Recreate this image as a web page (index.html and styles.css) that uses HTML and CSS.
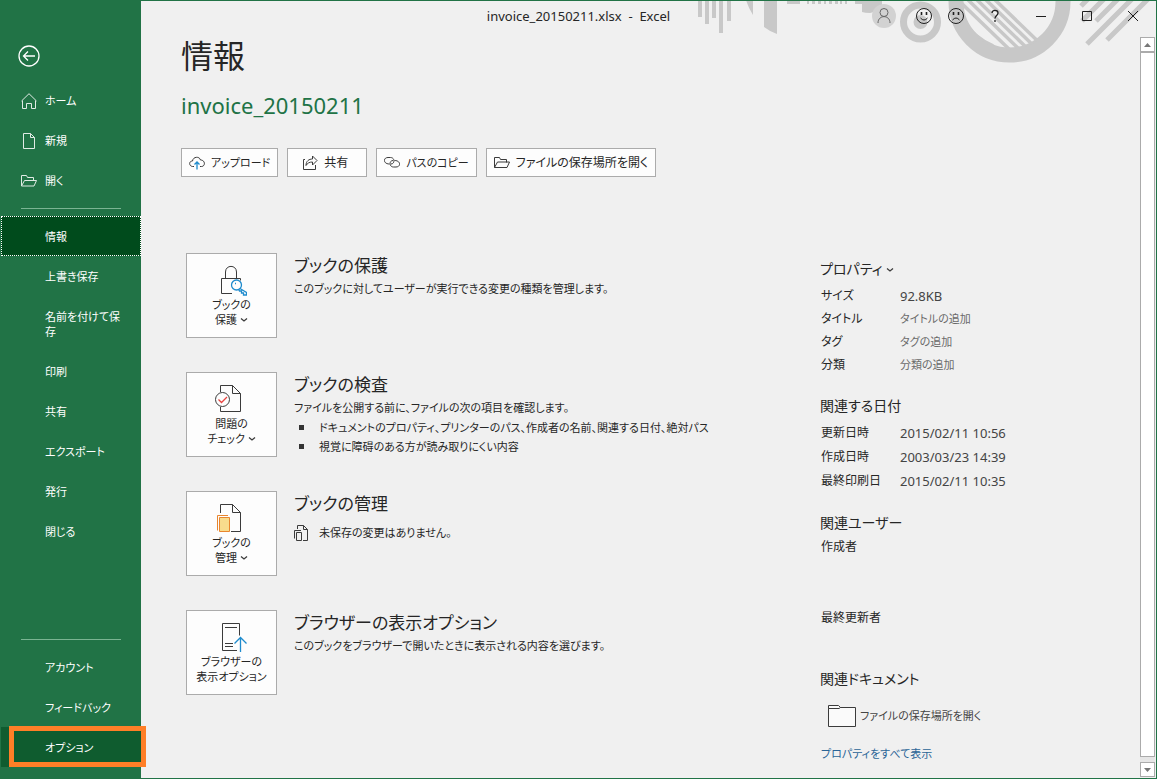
FILE: index.html
```html
<!DOCTYPE html>
<html lang="ja">
<head>
<meta charset="utf-8">
<meta name="viewport" content="width=device-width, initial-scale=1">
<title>invoice_20150211.xlsx - Excel</title>
<link rel="stylesheet" href="styles.css">
</head>
<body>
<div class="window">
  <header class="titlebar">
    <svg class="decor" width="497" height="63" viewBox="-1 1 497 63" aria-hidden="true">
      <defs><clipPath id="ring"><circle cx="349.5" cy="1.5" r="48"/></clipPath></defs>
      <g fill="#c8c8c8">
        <path d="M38 0h4v17h-4zM45 0h4v24h-4zM52 0h4v18h-4zM59 0h4v33h-4zM67 0h4v21h-4z"/>
        <path d="M86 0h7v15Q88 7 86 0zM104 0h13v34Q109 31 104 27z"/>
        <path d="M127 0h13v4h-13zM147 0h2v4h-2zM152 0h3v4h-3zM158 0h3v4h-3zM164 0h2v4h-2zM169 0h3v4h-3zM175 0h3v4h-3zM180 0h2v4h-2zM185 0h2v4h-2z"/>
        <path d="M195 0h27v10l-12 3q-5 0-8-1V4h-7z"/>
        <circle cx="260.500" cy="22" r="7"/>
      </g>
      <circle cx="224" cy="16" r="12" fill="#d2d2d2"/>
      <g fill="none" stroke="#c8c8c8">
        <circle cx="260.500" cy="22" r="17" stroke-width="7"/>
        <circle cx="349.500" cy="1.500" r="53.500" stroke-width="15"/>
        <g clip-path="url(#ring)" stroke-width="3.500">
          <path d="M331 -4l56 54M322 -4l56 54M313 -4l56 54M304 -4l56 54M294 -4l56 54"/>
          <path d="M302 20Q314 38 333 46" stroke-width="4"/>
        </g>
        <path d="M427 44L472 -1M447 40L488 -1M436 21L458 -1M422 21L444 -1M421 6L428 -1" stroke-width="5"/>
      </g>
    </svg>
    <div class="doc-title">invoice_20150211.xlsx&nbsp; -&nbsp; Excel</div>
    <div class="controls">
      <button class="ctl wide" type="button" aria-label="アカウント"><svg width="16" height="18" viewBox="0 0 16 18"><circle cx="8" cy="5.500" r="4"/><path d="M2 16C2 7.500 14 7.500 14 16"/></svg></button>
      <button class="ctl narrow" type="button" aria-label="良い点"><svg width="18" height="18" viewBox="0 0 18 18"><circle cx="9" cy="9" r="7.500"/><path d="M5.500 11Q9 15 12.500 11"/><path d="M6.500 5v3M11.500 5v3" stroke-width="1.600"/></svg></button>
      <button class="ctl narrow" type="button" aria-label="悪い点"><svg width="18" height="18" viewBox="0 0 18 18"><circle cx="9" cy="9" r="7.500"/><path d="M5.500 13Q9 9 12.500 13"/><path d="M6.500 5v3M11.500 5v3" stroke-width="1.600"/></svg></button>
      <button class="ctl" type="button" aria-label="ヘルプ"><svg width="10" height="14" viewBox="0 0 10 14"><path d="M2 4C2 .500 8 .500 8 4C8 6.500 5 6.500 5 9.500M5 11v2" stroke-width="1.300"/></svg></button>
      <button class="ctl" type="button" aria-label="最小化"><svg width="10" height="10" viewBox="0 0 10 10"><path d="M0 5.500h10"/></svg></button>
      <button class="ctl" type="button" aria-label="最大化"><svg width="10" height="10" viewBox="0 0 10 10"><path d="M.500 .500h9v9h-9z"/></svg></button>
      <button class="ctl" type="button" aria-label="閉じる"><svg width="10" height="10" viewBox="0 0 10 10"><path d="M0 0l10 10M10 0L0 10"/></svg></button>
    </div>
  </header>

  <nav class="sidebar">
    <button class="back" type="button" aria-label="戻る"><svg width="22" height="22" viewBox="0 0 22 22"><circle cx="11" cy="11" r="10"/><path d="M17 11H5.500M10 6.500L5.500 11l4.500 4.500"/></svg></button>
    <a class="item" href="#"><svg class="nav-icon" width="16" height="16" viewBox="0 0 16 16"><path d="M.500 8L8 .700 15.500 8M1.500 7.500v8h4v-5h5v5h4v-8"/></svg>ホーム</a>
    <a class="item" href="#"><svg class="nav-icon" width="16" height="16" viewBox="0 0 16 16"><path d="M2.500 .500h7l4 4v11h-11zM9.500 .500v4h4"/></svg>新規</a>
    <a class="item" href="#"><svg class="nav-icon" width="16" height="16" viewBox="0 0 16 16"><path d="M.500 13V2.500h5l1 2h6v3M.500 13l3-5.500h12L13 13z"/></svg>開く</a>
    <hr class="rule">
    <a class="item selected" href="#" aria-current="page">情報</a>
    <a class="item" href="#">上書き保存</a>
    <a class="item" href="#">名前を付けて保存</a>
    <a class="item" href="#">印刷</a>
    <a class="item" href="#">共有</a>
    <a class="item" href="#">エクスポート</a>
    <a class="item" href="#">発行</a>
    <a class="item" href="#">閉じる</a>
    <hr class="rule bottom">
    <a class="item" href="#">アカウント</a>
    <a class="item" href="#">フィードバック</a>
    <a class="item hot" href="#">オプション</a>
  </nav>

  <main class="page">
    <h1>情報</h1>
    <p class="filename">invoice_20150211</p>
    <div class="toolbar">
      <button class="compact" type="button"><svg width="16" height="16" viewBox="0 0 16 16"><path d="M5 11.500H3.500C-.300 11-.300 6 3.500 6C4 1.500 10.500 1 11.500 5C16.500 5 16.500 11.500 12.500 11.500H11"/><path class="blue" d="M8 14.500V7M5.500 9.500L8 7l2.500 2.500"/></svg>アップロード</button>
      <button class="share" type="button"><svg width="16" height="16" viewBox="0 0 16 16"><path d="M3 4.500H1.500v10h12V10M4 10.500C4 6 7 4 10.500 4V1L15 5.500 10.500 10V7C7.500 7 5.500 8 4 10.500z"/></svg>共有</button>
      <button class="compact" type="button"><svg width="16" height="16" viewBox="0 0 16 16"><path d="M5.500 9C-1 9-1 2.500 4 2.500h2.500C11 2.500 11 9 7 9M10.500 5.500C17 5.500 17 12 12 12H9.500C5 12 5 5.500 9 5.500"/></svg>パスのコピー</button>
      <button type="button"><svg width="16" height="16" viewBox="0 0 16 16"><path d="M.500 12.500V2.500h5l1 2h6v3M.500 12.500l3-5.500h12L13 12.500z"/></svg>ファイルの保存場所を開く</button>
    </div>

    <div class="columns">
      <div class="sections">
        <section class="section">
          <button class="tile" type="button">
            <svg class="pic" width="32" height="32" viewBox="0 0 32 32"><path d="M17 28.500H6.500v-15h19v2M10.500 13.500V7C10.500-.500 21.500-.500 21.500 7v6.500"/><g class="blue"><circle cx="21.500" cy="20" r="5"/><path d="M25 23.500l6.500 4v2.500h-3v-2h-2v-2h-2l-1-2"/><path d="M20 18.500h1"/></g></svg>
            <span>ブックの<br>保護 <svg class="chev" width="8" height="6" viewBox="0 0 8 6"><path d="M1 1.500l3 2.500 3-2.500"/></svg></span>
          </button>
          <div class="info">
            <h2>ブックの保護</h2>
            <p>このブックに対してユーザーが実行できる変更の種類を管理します。</p>
          </div>
        </section>
        <section class="section">
          <button class="tile" type="button">
            <svg class="pic" width="32" height="32" viewBox="0 0 32 32"><path d="M5.500 8V1.500h12l8 8v18h-20V23M17.500 1.500v8h8"/><circle cx="7.500" cy="15.500" r="7" fill="#fdfdfd"/><path class="red" d="M3.500 15.500l3 3 5.500-5.500"/></svg>
            <span>問題の<br>チェック <svg class="chev" width="8" height="6" viewBox="0 0 8 6"><path d="M1 1.500l3 2.500 3-2.500"/></svg></span>
          </button>
          <div class="info">
            <h2>ブックの検査</h2>
            <p>ファイルを公開する前に、ファイルの次の項目を確認します。</p>
            <ul>
              <li>ドキュメントのプロパティ、プリンターのパス、作成者の名前、関連する日付、絶対パス</li>
              <li>視覚に障碍のある方が読み取りにくい内容</li>
            </ul>
          </div>
        </section>
        <section class="section">
          <button class="tile" type="button">
            <svg class="pic" width="32" height="32" viewBox="0 0 32 32"><path d="M5.500 10V1.500h12l8 8v19H16M17.500 1.500v8h8"/><path class="orange" d="M13 12.500H2.500v15"/><path class="orange" d="M4.500 14.500h10v14h-10z" fill="#f8dc8c"/></svg>
            <span>ブックの<br>管理 <svg class="chev" width="8" height="6" viewBox="0 0 8 6"><path d="M1 1.500l3 2.500 3-2.500"/></svg></span>
          </button>
          <div class="info">
            <h2>ブックの管理</h2>
            <p class="versions"><svg width="16" height="16" viewBox="0 0 16 16"><path d="M3.500 4V.500h6l4 4v11H9M9.500 .500v4h4M7 5.500H.500v8M2.500 7.500h5v8h-5z"/></svg>未保存の変更はありません。</p>
          </div>
        </section>
        <section class="section">
          <button class="tile" type="button">
            <svg class="pic" width="32" height="32" viewBox="0 0 32 32"><path d="M22 28.500H7.500v-27h17v12M10 5.500h12M10 21.500h8M10 24.500h8"/><path class="blue" d="M25.500 30V16M19.500 21.500l6-6 6 6"/></svg>
            <span>ブラウザーの<br>表示オプション</span>
          </button>
          <div class="info">
            <h2>ブラウザーの表示オプション</h2>
            <p>このブックをブラウザーで開いたときに表示される内容を選びます。</p>
          </div>
        </section>
      </div>

      <aside class="props">
        <h3>プロパティ <svg class="chev" width="8" height="6" viewBox="0 0 8 6"><path d="M1 1.500l3 2.500 3-2.500"/></svg></h3>
        <table>
          <tr><th scope="row">サイズ</th><td class="latin">92.8KB</td></tr>
          <tr><th scope="row">タイトル</th><td class="hint">タイトルの追加</td></tr>
          <tr><th scope="row">タグ</th><td class="hint">タグの追加</td></tr>
          <tr><th scope="row">分類</th><td class="hint">分類の追加</td></tr>
        </table>
        <h3>関連する日付</h3>
        <table class="dates">
          <tr><th scope="row">更新日時</th><td class="latin">2015/02/11 10:56</td></tr>
          <tr><th scope="row">作成日時</th><td class="latin">2003/03/23 14:39</td></tr>
          <tr><th scope="row">最終印刷日</th><td class="latin">2015/02/11 10:35</td></tr>
        </table>
        <h3>関連ユーザー</h3>
        <p class="person">作成者</p>
        <p class="person">最終更新者</p>
        <h3 class="related">関連ドキュメント</h3>
        <a class="location" href="#"><svg width="28" height="22" viewBox="0 0 28 22"><path d="M.500 2.500h27v19H.500z" fill="#fafafa"/><path d="M.500 3.500v-3h10l2 2-1.500 1z" fill="#fafafa"/></svg>ファイルの保存場所を開く</a>
        <a class="all" href="#">プロパティをすべて表示</a>
      </aside>
    </div>
  </main>

  <div class="scrollbar">
    <button type="button" aria-label="上へ"><svg width="7" height="4" viewBox="0 0 7 4"><path d="M0 4L3.500 0 7 4z"/></svg></button>
    <div class="thumb"></div>
    <button type="button" aria-label="下へ"><svg width="7" height="4" viewBox="0 0 7 4"><path d="M0 0h7L3.500 4z"/></svg></button>
  </div>
</div>
</body>
</html>
```

FILE: styles.css
```css
* { box-sizing: border-box; }

body {
  margin: 0;
  color: #262626;
  background: #f0f0f0;
  font-family: "Noto Sans", "Noto Sans CJK JP", sans-serif;
  font-size: 11px;
  line-height: 16px;
  font-feature-settings: "palt";
}

h1, h2, h3, p, ul { margin: 0; padding: 0; font-weight: 400; }
a { color: inherit; text-decoration: none; }
button { font: inherit; font-feature-settings: inherit; color: inherit; padding: 0; margin: 0; }
svg { fill: none; stroke: #3b3b3b; stroke-width: 1; flex: none; }
.blue { stroke: #1e8bcd; stroke-width: 1.3; }
.red { stroke: #e8423f; stroke-width: 1.3; }
.orange { stroke: #e8862e; }

.window {
  display: grid;
  grid-template-columns: 140px 1fr 17px;
  grid-template-rows: 36px 1fr;
  min-height: 100vh;
  border: 1px solid #217346;
}

/* Title bar */
.titlebar {
  grid-area: 1 / 1 / 2 / 4;
  position: relative;
  z-index: 1;
  display: grid;
  grid-template-columns: 1fr auto 1fr;
}
.decor { position: absolute; top: 0; right: 0; stroke: none; pointer-events: none; }
.doc-title { grid-column: 2; font-size: 13px; line-height: 31px; }
.controls { position: relative; display: flex; justify-content: flex-end; height: 30px; }
.ctl {
  display: flex;
  align-items: center;
  justify-content: center;
  width: 46px;
  border: 0;
  background: none;
}
.ctl svg { stroke: #1f1f1f; }
.ctl.narrow { width: 32px; }
.ctl.wide { width: 48px; }
.ctl.wide svg { stroke: #666; }

/* Navigation */
.sidebar {
  grid-area: 1 / 1 / 3 / 2;
  z-index: 2;
  display: flex;
  flex-direction: column;
  padding: 44px 0 11px;
  background: #217346;
  color: #fff;
}
.back { width: 22px; height: 22px; margin: 0 0 13px 17px; border: 0; background: none; }
.back svg { display: block; stroke: #fff; stroke-width: 1.300; }
.item {
  position: relative;
  display: flex;
  align-items: center;
  min-height: 40px;
  padding: 13px 18px 12px 44px;
  line-height: 15px;
}
.nav-icon { position: absolute; left: 20px; stroke: #e0ebe4; }
.rule { width: 100px; margin: 8px 20px 7px; border: 0; border-top: 1px solid #7ab492; flex: none; }
.rule.bottom { margin-top: auto; }
.selected { background: #004b1c; outline: 1px dotted #fff; outline-offset: -1px; }
.hot { background: #0f5c2f; }
.hot::after {
  content: "";
  position: absolute;
  inset: -1px -5px 0 8px;
  border: 5px solid #ff7f27;
}

/* Page */
.page { grid-area: 2 / 2 / 3 / 3; padding: 0 0 10px 40px; min-width: 0; }
h1 { font-size: 32px; line-height: 38px; }
.filename { margin-top: 15px; font-size: 22px; line-height: 30px; color: #217346; }
.toolbar { display: flex; gap: 9px; margin-top: 28px; }
.toolbar button {
  display: flex;
  align-items: center;
  gap: 6px;
  height: 29px;
  padding: 0 7px;
  border: 1px solid #ababab;
  background: #fdfdfd;
  font-size: 12px;
}
.toolbar .compact { font-size: 11px; }
.toolbar .share { padding: 0 18px 0 14px; }

.columns { display: grid; grid-template-columns: 1fr 319px; margin-top: 76px; }
.sections { display: flex; flex-direction: column; gap: 34px; padding-left: 5px; }
.section { display: flex; gap: 17px; min-height: 85px; }
.tile {
  display: flex;
  flex-direction: column;
  align-items: center;
  justify-content: center;
  flex: none;
  width: 91px;
  height: 85px;
  border: 1px solid #ababab;
  background: #fdfdfd;
  line-height: 15px;
}
.pic { margin-right: 1px; }
.chev { vertical-align: 1px; stroke-width: 1.300; }
h2 { font-size: 17px; line-height: 26px; }
.info p { line-height: 20px; }
.info ul { list-style: none; }
.info li { display: flex; align-items: center; gap: 15px; padding-left: 5px; line-height: 19px; }
.info li::before { content: ""; width: 5px; height: 5px; background: #333; }
.info .versions { display: flex; align-items: center; gap: 9px; padding-top: 6px; }

.props { padding-top: 4px; }
h3 { font-size: 14px; line-height: 24px; }
table { margin: 3px 0 18px; border-collapse: collapse; }
th, td { height: 23px; padding: 0; font-weight: 400; text-align: left; }
.dates th, .dates td { height: 24px; }
th { width: 80px; padding-left: 1px; font-size: 12px; }
.latin { font-size: 13px; color: #444; }
.hint { color: #6a6a6a; }
.person { padding-left: 1px; font-size: 12px; line-height: 24px; }
.person + .person { margin-top: 47px; }
.related { margin-top: 37px; }
.location { display: flex; align-items: center; gap: 4px; height: 24px; margin: 13px 0 14px 8px; color: #444; }
.all { display: block; padding-left: 1px; line-height: 24px; color: #2a6496; }

/* Scroll bar */
.scrollbar { grid-area: 2 / 3 / 3 / 4; display: flex; flex-direction: column; width: 15px; margin: 0 0 1px 1px; background: #e6e6e6; }
.scrollbar button {
  display: flex;
  align-items: center;
  justify-content: center;
  width: 15px;
  height: 15px;
  border: 1px solid #ababab;
  background: #fff;
}
.scrollbar svg { fill: #777; stroke: none; }
.thumb { flex: 1; margin-bottom: 5px; border: 1px solid #ababab; background: #fff; }
```
